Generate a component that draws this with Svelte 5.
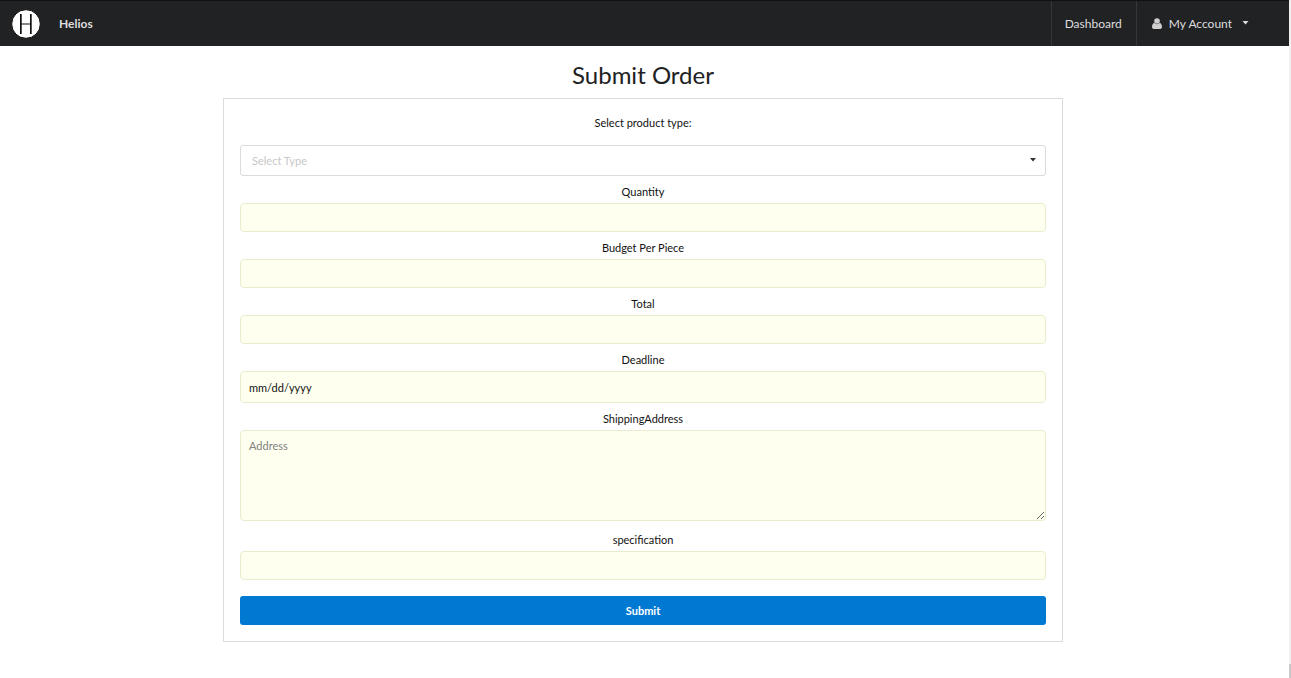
<script>
  const amounts = [
    { id: 'quantity', label: 'Quantity' },
    { id: 'budget', label: 'Budget Per Piece' },
    { id: 'total', label: 'Total' }
  ];
  let productType = $state('');
</script>

<div class="page">
  <div class="content">
    <header>
      <a class="brand" href="#home">
        <svg class="logo" viewBox="0 0 30 30" aria-hidden="true">
          <circle cx="15" cy="15" r="14.3" fill="#fff" stroke="#111" stroke-width="1" />
          <rect x="9" y="5" width="1.7" height="20" fill="#111" />
          <rect x="19" y="5" width="1.7" height="20" fill="#111" />
          <rect x="9" y="14.5" width="11" height="1" fill="#111" />
        </svg>
        <span>Helios</span>
      </a>
      <nav>
        <a class="item" href="#dashboard">Dashboard</a>
        <button class="item account" type="button">
          <svg class="user" viewBox="0 0 10 11" aria-hidden="true">
            <circle cx="5" cy="3" r="2.8" />
            <path d="M2.3 4.8C.6 5.4 0 7.2 0 9.1 0 10.2.7 11 1.8 11h6.4C9.3 11 10 10.2 10 9.1 10 7.2 9.4 5.4 7.7 4.8 6.4 6.7 3.6 6.7 2.3 4.8Z" />
          </svg>
          <span>My Account</span>
          <svg class="caret" viewBox="0 0 6 4" aria-hidden="true"><path d="M0 0h6L3 3.5Z" /></svg>
        </button>
      </nav>
    </header>

    <main>
      <h1>Submit Order</h1>
      <form onsubmit={(e) => e.preventDefault()}>
        <label class="intro" for="type">Select product type:</label>
        <div class="dropdown">
          <select id="type" bind:value={productType}>
            <option value="">Select Type</option>
          </select>
          <svg class="caret" viewBox="0 0 6 4" aria-hidden="true"><path d="M0 0h6L3 3.5Z" /></svg>
        </div>
        {#each amounts as field (field.id)}
          <div class="field">
            <label for={field.id}>{field.label}</label>
            <input id={field.id} type="text" />
          </div>
        {/each}
        <div class="field">
          <label for="deadline">Deadline</label>
          <input id="deadline" class="date" type="date" />
        </div>
        <div class="field">
          <label for="address">ShippingAddress</label>
          <textarea id="address" placeholder="Address"></textarea>
        </div>
        <div class="field">
          <label for="specification">specification</label>
          <input id="specification" type="text" />
        </div>
        <button class="submit" type="submit">Submit</button>
      </form>
    </main>
  </div>
  <div class="track" aria-hidden="true"><div class="thumb"></div></div>
</div>

<style>
  :global(body) {
    background: #fff;
  }
  .page {
    display: flex;
    min-height: 100vh;
    font-family: Lato, sans-serif;
    font-size: 11px;
    line-height: 16px;
    color: #111;
  }
  .page *,
  .page {
    box-sizing: border-box;
  }
  .content {
    flex: 1;
    min-width: 0;
  }
  header {
    display: flex;
    justify-content: space-between;
    height: 46px;
    background: #212224;
    border-top: 1px solid #101113;
    font-size: 12px;
    color: #dededf;
  }
  .brand {
    display: flex;
    align-items: center;
    gap: 18px;
    padding-left: 11px;
    color: inherit;
    font-weight: 700;
    text-decoration: none;
  }
  .logo {
    width: 30px;
    height: 30px;
  }
  nav {
    display: flex;
    padding-right: 27px;
  }
  .item {
    display: flex;
    align-items: center;
    padding: 0 14px 0 13px;
    border: 0;
    border-left: 1px solid #353638;
    background: none;
    color: inherit;
    font: inherit;
    text-decoration: none;
  }
  .account {
    padding: 0 13px 0 15px;
  }
  .user {
    width: 10px;
    height: 11px;
    margin-right: 7px;
    fill: #cfcfd0;
  }
  .caret {
    width: 6px;
    height: 4px;
    fill: currentColor;
  }
  .account .caret {
    width: 7px;
    margin: 0 0 2px 10px;
  }
  main {
    max-width: 843px;
    margin: 0 auto;
    padding: 13px 3px 36px 0;
  }
  h1 {
    margin: 0 0 7px;
    font-size: 24px;
    line-height: 32px;
    font-weight: 400;
    text-align: center;
    color: #212121;
  }
  form {
    padding: 16px;
    border: 1px solid #dbdbdc;
  }
  label {
    display: block;
    margin-bottom: 3px;
    text-align: center;
  }
  .intro {
    margin-bottom: 14px;
  }
  .dropdown {
    display: grid;
    align-items: center;
    margin-bottom: 8px;
  }
  .dropdown > * {
    grid-area: 1 / 1;
  }
  .dropdown .caret {
    justify-self: end;
    margin: 0 10px 2px 0;
    fill: #333;
    pointer-events: none;
  }
  select {
    width: 100%;
    height: 31px;
    padding: 0 11px;
    border: 1px solid #dbdbdc;
    border-radius: 3px;
    appearance: none;
    background: #fff;
    color: #c7c7c7;
    font: inherit;
  }
  .field {
    margin-bottom: 8px;
  }
  input,
  textarea {
    display: block;
    width: 100%;
    height: 29px;
    padding: 0 8px;
    border: 1px solid #e8edd0;
    border-radius: 4px;
    background: #feffef;
    color: #111;
    font: inherit;
  }
  .date {
    height: 32px;
    padding-top: 1px;
  }
  .date::-webkit-calendar-picker-indicator {
    display: none;
  }
  .date::-webkit-datetime-edit-fields-wrapper,
  .date::-webkit-datetime-edit,
  .date::-webkit-datetime-edit-month-field,
  .date::-webkit-datetime-edit-day-field,
  .date::-webkit-datetime-edit-year-field,
  .date::-webkit-datetime-edit-text {
    padding: 0;
  }
  textarea {
    height: 91px;
    margin-bottom: 11px;
    padding: 7px 8px;
    resize: vertical;
  }
  textarea::placeholder {
    color: #808080;
  }
  .submit {
    display: block;
    width: 100%;
    height: 29px;
    margin-top: 16px;
    border: 0;
    border-radius: 3px;
    background: #0079d3;
    color: #fff;
    font: inherit;
    font-weight: 700;
  }
  .track {
    display: flex;
    align-items: flex-end;
    width: 2px;
    background: #f1f1f1;
  }
  .thumb {
    width: 100%;
    height: 14px;
    background: #c9c9c9;
  }
</style>
